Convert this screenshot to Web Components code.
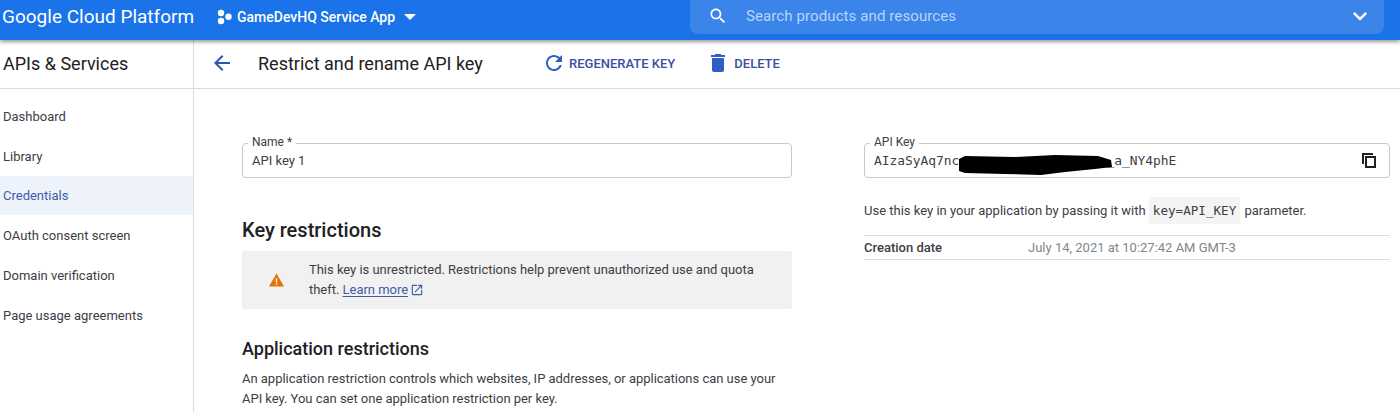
<!DOCTYPE html>
<html>
<head>
<meta charset="utf-8">
<title>Restrict and rename API key</title>
<style>
  html, body { margin: 0; height: 412px; overflow: hidden; background: #fff; }
  body { font-family: Roboto, "Liberation Sans", sans-serif; color: #202124; }
</style>
</head>
<body>
<app-shell>
  <top-bar slot="top" project="GameDevHQ Service App"></top-bar>
  <side-nav slot="side" heading="APIs &amp; Services">
    <nav-item>Dashboard</nav-item>
    <nav-item>Library</nav-item>
    <nav-item active>Credentials</nav-item>
    <nav-item>OAuth consent screen</nav-item>
    <nav-item>Domain verification</nav-item>
    <nav-item>Page usage agreements</nav-item>
  </side-nav>
  <page-toolbar slot="toolbar"></page-toolbar>
  <key-form slot="left"></key-form>
  <key-details slot="right"></key-details>
</app-shell>

<script>
class AppShell extends HTMLElement {
  constructor() {
    super();
    this.attachShadow({mode: 'open'}).innerHTML = `
      <style>
        :host { display: grid; grid-template-rows: 40px 1fr; height: 412px; overflow: hidden; }
        .body { display: grid; grid-template-columns: 194px 1fr; min-height: 0; }
        .main { display: grid; grid-template-rows: 49px 1fr; min-width: 0; }
        .content { display: grid; grid-template-columns: 550px 526px; column-gap: 72px; padding-left: 48px; }
      </style>
      <slot name="top"></slot>
      <div class="body">
        <slot name="side"></slot>
        <div class="main">
          <slot name="toolbar"></slot>
          <div class="content">
            <slot name="left"></slot>
            <slot name="right"></slot>
          </div>
        </div>
      </div>`;
  }
}

class TopBar extends HTMLElement {
  constructor() {
    super();
    this.attachShadow({mode: 'open'});
  }
  connectedCallback() {
    this.shadowRoot.innerHTML = `
      <style>
        :host { display: flex; align-items: flex-start; height: 40px; background: #1a73e8; color: #fff;
                box-shadow: 0 2px 4px rgba(0,0,0,.4); position: relative; z-index: 2; }
        .brand { font-size: 19px; line-height: 34px; width: 194px; padding-left: 2px; box-sizing: border-box;
                 white-space: nowrap; }
        .project { display: flex; align-items: center; height: 33px; padding-left: 23px; width: 496px; box-sizing: border-box;
                   font-size: 14px; font-weight: 500; }
        .project .dots { margin-right: 5px; }
        .project .caret { margin-left: 9px; }
        .search { display: flex; align-items: center; width: 694px; height: 34px; padding: 0 0 2px 18px; background: #3b84ea;
                  border-radius: 0 0 8px 8px; box-sizing: border-box; }
        .search .ph { margin-left: 18px; flex: 1; font-size: 15px; color: #b9d5f8; letter-spacing: .1px; }
        .search .chev { margin-right: 10px; }
        svg { display: block; fill: currentColor; flex: none; }
      </style>
      <div class="brand">Google Cloud Platform</div>
      <div class="project">
        <svg class="dots" width="15" height="16" viewBox="0 0 15 16"><circle cx="4" cy="4" r="3.2"/><circle cx="4" cy="12" r="3.2"/><circle cx="11.5" cy="7.8" r="3.2"/></svg>
        <span>${this.getAttribute('project')}</span>
        <svg class="caret" width="12" height="6" viewBox="0 0 12 6"><path d="M0 0h12L6 6z"/></svg>
      </div>
      <div class="search">
        <svg width="20" height="20" viewBox="0 0 24 24"><path d="M15.5 14h-.79l-.28-.27C15.41 12.59 16 11.11 16 9.5 16 5.91 13.09 3 9.5 3S3 5.91 3 9.5 5.91 16 9.5 16c1.61 0 3.09-.59 4.23-1.57l.27.28v.79l5 4.99L20.49 19l-4.99-5zm-6 0C7.01 14 5 11.99 5 9.5S7.01 5 9.5 5 14 7.01 14 9.5 11.99 14 9.5 14z"/></svg>
        <span class="ph">Search products and resources</span>
        <svg class="chev" width="28" height="28" viewBox="0 0 24 24"><path d="M16.59 8.59L12 13.17 7.41 8.59 6 10l6 6 6-6z"/></svg>
      </div>`;
  }
}

class SideNav extends HTMLElement {
  constructor() {
    super();
    this.attachShadow({mode: 'open'});
  }
  connectedCallback() {
    this.shadowRoot.innerHTML = `
      <style>
        :host { display: block; border-right: 1px solid #dadce0; }
        h2 { margin: 0; height: 48px; line-height: 47px; padding-left: 3px; font-size: 18px; font-weight: 400;
             border-bottom: 1px solid #dadce0; color: #202124; }
        .items { padding-top: 7px; }
      </style>
      <h2>${this.getAttribute('heading')}</h2>
      <div class="items"><slot></slot></div>`;
  }
}

class NavItem extends HTMLElement {
  constructor() {
    super();
    this.attachShadow({mode: 'open'}).innerHTML = `
      <style>
        :host { display: flex; align-items: center; height: 39.8px; box-sizing: border-box; padding: 1px 0 0 3px; font-size: 13px; color: #3c4043; }
        :host([active]) { background: #edf2fb; color: #3f5ca8; }
      </style>
      <slot></slot>`;
  }
}

class PageToolbar extends HTMLElement {
  constructor() {
    super();
    this.attachShadow({mode: 'open'}).innerHTML = `
      <style>
        :host { display: flex; align-items: center; height: 46px; padding-bottom: 2px;
                border-bottom: 1px solid #dadce0; color: #2f55b4; }
        svg { display: block; fill: currentColor; flex: none; }
        .back { margin-left: 16px; }
        h1 { margin: 0 0 0 24px; width: 260px; font-size: 18px; font-weight: 400; color: #202124; white-space: nowrap; }
        .btn { display: flex; align-items: center; font-size: 13px; font-weight: 500; color: #3b4fa0; }
        .btn svg { color: #2f5fc4; }
        .regen { margin-left: 24px; }
        .regen svg { margin-right: 3px; }
        .del { margin-left: 31px; }
        .del svg { margin-right: 4px; }
      </style>
      <svg class="back" width="24" height="24" viewBox="0 0 24 24"><path d="M20 11H7.83l5.59-5.59L12 4l-8 8 8 8 1.41-1.41L7.83 13H20v-2z"/></svg>
      <h1>Restrict and rename API key</h1>
      <div class="btn regen">
        <svg width="24" height="24" viewBox="0 0 24 24"><path d="M17.65 6.35C16.2 4.9 14.21 4 12 4c-4.42 0-7.99 3.58-7.99 8s3.57 8 7.99 8c3.73 0 6.84-2.55 7.73-6h-2.08c-.82 2.33-3.04 4-5.65 4-3.31 0-6-2.69-6-6s2.69-6 6-6c1.66 0 3.14.69 4.22 1.78L13 11h7V4l-2.35 2.35z"/></svg>
        <span>REGENERATE KEY</span>
      </div>
      <div class="btn del">
        <svg width="24" height="24" viewBox="0 0 24 24"><path d="M6 19c0 1.1.9 2 2 2h8c1.1 0 2-.9 2-2V7H6v12zM19 4h-3.5l-1-1h-5l-1 1H5v2h14V4z"/></svg>
        <span>DELETE</span>
      </div>`;
  }
}

class OutlinedField extends HTMLElement {
  constructor() {
    super();
    this.attachShadow({mode: 'open'});
  }
  connectedCallback() {
    this.shadowRoot.innerHTML = `
      <style>
        :host { display: flex; align-items: center; position: relative; height: 35px; box-sizing: border-box;
                border: 1px solid #c6c9cc; border-radius: 4px; padding: 0 9px; font-size: 13px; color: #3c4043; }
        .label { position: absolute; left: 5px; top: -9px; padding: 0 4px; background: #fff; font-size: 12px; line-height: 14px; color: #3c4043; }
      </style>
      <span class="label">${this.getAttribute('label')}</span>
      <slot></slot>`;
  }
}

class KeyForm extends HTMLElement {
  constructor() {
    super();
    this.attachShadow({mode: 'open'}).innerHTML = `
      <style>
        :host { display: block; padding-top: 54px; }
        h3 { margin: 0; font-weight: 500; color: #202124; }
        .h1 { margin-top: 40px; font-size: 20px; line-height: 24px; }
        .h2 { margin-top: 28px; font-size: 18px; line-height: 24px; }
        .warn { display: flex; align-items: center; height: 58px; margin-top: 9px; background: #f1f1f1; border-radius: 2px; }
        .warn > svg { margin-left: 27px; margin-right: 25px; flex: none; display: block; }
        .lines { font-size: 13px; line-height: 20px; color: #3c4043; letter-spacing: -.025px; }
        .lines div { display: flex; align-items: center; white-space: pre; }
        a { color: #3f5ca8; text-decoration: underline; text-underline-offset: 2px; }
        .ext { margin-left: 2px; fill: #3f5ca8; display: block; }
        .para { margin: 8px 0 0; font-size: 13px; line-height: 20px; color: #3c4043; width: 540px; letter-spacing: -.025px; }
      </style>
      <outlined-field label="Name *">API key 1</outlined-field>
      <h3 class="h1">Key restrictions</h3>
      <div class="warn">
        <svg width="15" height="14" viewBox="0 0 16 14"><path fill="#e37400" d="M8 0l8 14H0z"/><path fill="#f1f1f1" d="M7.2 5h1.6v4.6H7.2zM7.2 10.4h1.6V12H7.2z"/></svg>
        <div class="lines">
          <div>This key is unrestricted. Restrictions help prevent unauthorized use and quota</div>
          <div><span>theft. </span><a>Learn more</a><svg class="ext" width="14" height="14" viewBox="0 0 24 24"><path d="M19 19H5V5h7V3H5c-1.11 0-2 .9-2 2v14c0 1.1.89 2 2 2h14c1.1 0 2-.9 2-2v-7h-2v7zM14 3v2h3.59l-9.83 9.83 1.41 1.41L19 6.41V10h2V3h-7z"/></svg></div>
        </div>
      </div>
      <h3 class="h2">Application restrictions</h3>
      <p class="para">An application restriction controls which websites, IP addresses, or applications can use your API key. You can set one application restriction per key.</p>`;
  }
}

class KeyDetails extends HTMLElement {
  constructor() {
    super();
    this.attachShadow({mode: 'open'}).innerHTML = `
      <style>
        :host { display: block; padding-top: 54px; font-size: 13px; color: #3c4043; }
        .value { display: flex; align-items: center; width: 100%; position: relative; font-family: "DejaVu Sans Mono", monospace; font-size: 12.9px; }
        .hidden { width: 147px; flex: none; }
        .copy { margin-left: auto; margin-right: 4px; display: block; fill: #202124; fill-rule: evenodd; }
        .blob { position: absolute; left: 81px; top: 1px; }
        .use { margin: 19px 0 0; line-height: 28px; white-space: nowrap; }
        code { font-family: "DejaVu Sans Mono", monospace; font-size: 12.6px; background: #f4f4f4; padding: 6px 4px; margin: 0 1px 0 0; }
        .row { display: flex; align-items: center; height: 25px; box-sizing: border-box; margin-top: 10px; border-top: 1px solid #dadce0; border-bottom: 1px solid #dadce0; }
        .row b { width: 164px; font-weight: 500; color: #3c4043; }
        .row span { color: #80868b; }
      </style>
      <outlined-field label="API Key">
        <div class="value">
          <span>AIzaSyAq7nc</span><span class="hidden"></span><span>_a_NY4phE</span>
          <svg class="copy" width="14" height="15" viewBox="0 0 14 15"><path d="M0 0h11v2H2v9H0zM3 3h11v12H3zM5 5v8h7V5z"/></svg>
          <svg class="blob" width="162" height="24" viewBox="0 0 162 24"><path d="M4 5L10 2 60 3 100 1 143 2 156 6 157 13 140 15 110 18 86 21 50 20 10 19 4 17z"/></svg>
        </div>
      </outlined-field>
      <p class="use">Use this key in your application by passing it with <code>key=API_KEY</code> parameter.</p>
      <div class="row"><b>Creation date</b><span>July 14, 2021 at 10:27:42 AM GMT-3</span></div>`;
  }
}

customElements.define('app-shell', AppShell);
customElements.define('top-bar', TopBar);
customElements.define('side-nav', SideNav);
customElements.define('nav-item', NavItem);
customElements.define('page-toolbar', PageToolbar);
customElements.define('outlined-field', OutlinedField);
customElements.define('key-form', KeyForm);
customElements.define('key-details', KeyDetails);
</script>
</body>
</html>
